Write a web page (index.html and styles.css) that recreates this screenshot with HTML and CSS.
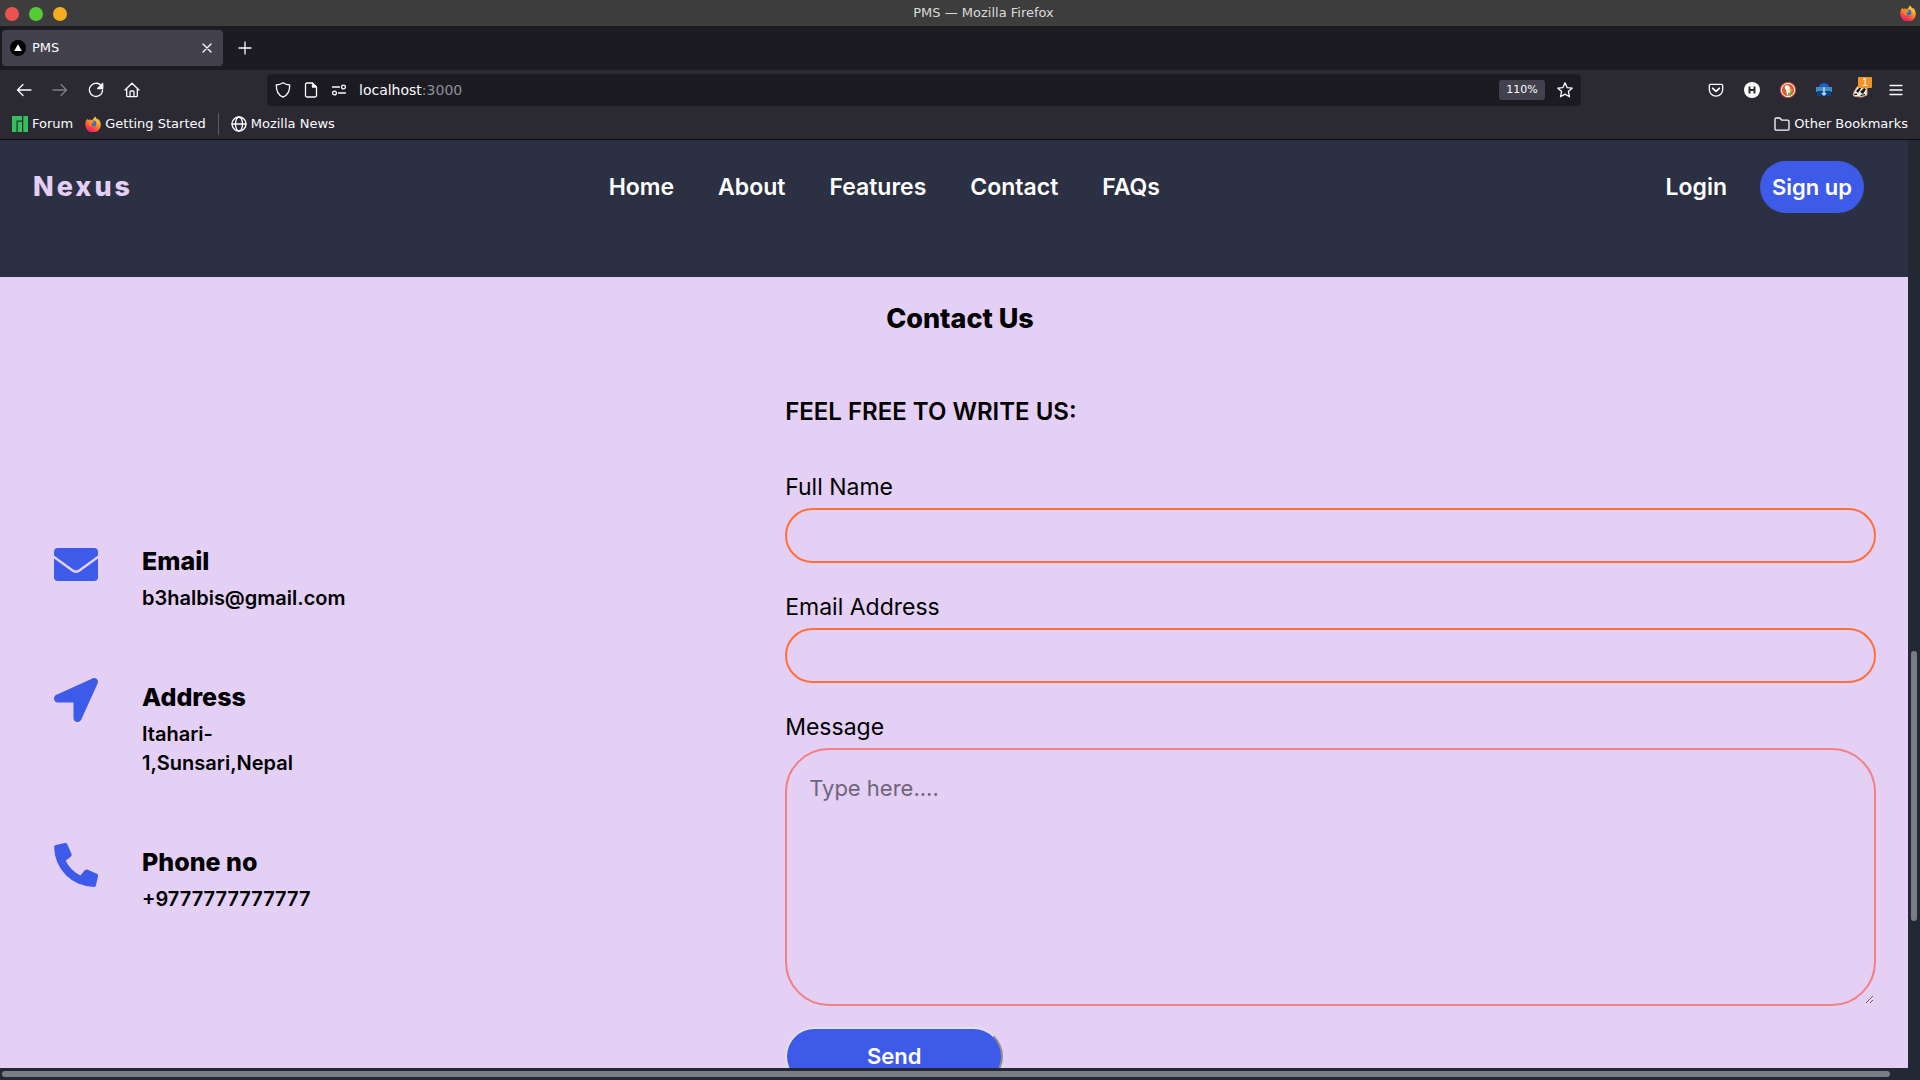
FILE: index.html
```html
<!DOCTYPE html>
<html lang="en">
<head>
<meta charset="utf-8">
<title>PMS</title>
<link rel="stylesheet" href="styles.css">
</head>
<body>
<svg class="defs" aria-hidden="true">
  <defs>
    <linearGradient id="flame" x1="0.8" y1="0" x2="0.3" y2="1">
      <stop offset="0" stop-color="#ffe93c"/><stop offset="0.4" stop-color="#ff9a1f"/><stop offset="0.75" stop-color="#ff4040"/><stop offset="1" stop-color="#e31587"/>
    </linearGradient>
    <symbol id="firefox" viewBox="0 0 16 16">
      <path fill="url(#flame)" d="M10 .2c.4 1.500 2 2.300 3 3.500l.300-.7c1.600 1.700 2.500 3.900 2.500 5.800A7.700 7.700 0 0 1 .3 9C.2 6.500 1 4.500 2.500 2.600l.3 1.700c1.200-.8 2.600-.7 3.700-.2C8 3.800 9.200 2 10 .2z"/>
      <circle cx="8.300" cy="7.500" r="3" fill="#2a6fe0"/>
      <path fill="#ff8a1c" d="M2.800 4.300c1.500-.8 3-.5 4.200.7 1 .5 2 .6 2.200 1.300-.6.8-1.700.7-2.400 1.300-.7.7-.2 2 1 2.600-2.200.3-4.300-1-5-5.900z"/>
    </symbol>
  </defs>
</svg>

<header class="titlebar">
  <div class="lights"><span class="light red"></span><span class="light green"></span><span class="light amber"></span></div>
  <span class="window-title">PMS — Mozilla Firefox</span>
  <svg class="icon16 app-icon"><use href="#firefox"/></svg>
</header>

<div class="tabstrip">
  <div class="tab">
    <svg class="icon16" viewBox="0 0 16 16"><circle cx="8" cy="8" r="8" fill="#000"/><path fill="#fff" d="M8 4.200 11.800 11H4.200z"/></svg>
    <span class="tab-title">PMS</span>
    <button class="plain" aria-label="Close tab"><svg class="line" width="10" height="10" viewBox="0 0 10 10"><path d="m1 1 8 8M9 1 1 9"/></svg></button>
  </div>
  <button class="plain new-tab" aria-label="New tab"><svg class="line" width="14" height="14" viewBox="0 0 14 14"><path d="M7 1v12M1 7h12"/></svg></button>
</div>

<div class="toolbar">
  <div class="tools">
    <button class="plain" aria-label="Back"><svg class="line icon16" viewBox="0 0 16 16"><path d="M15 8H1.500M7 2.500 1.500 8 7 13.500"/></svg></button>
    <button class="plain" aria-label="Forward" disabled><svg class="line icon16" viewBox="0 0 16 16"><path d="M1 8h13.500M9 2.500 14.500 8 9 13.500"/></svg></button>
    <button class="plain" aria-label="Reload"><svg class="line icon16" viewBox="0 0 16 16"><path d="M13.700 4.500A6.600 6.600 0 1 0 14.600 8"/><path class="solid" d="M14.700 1.500v5H9.700z"/></svg></button>
    <button class="plain" aria-label="Home"><svg class="line icon16" viewBox="0 0 16 16"><path d="M1 8 8 1.200 15 8M2.700 6.500v7.200c0 .6.400 1 1 1h8.600c.6 0 1-.4 1-1V6.500M6 14.500V10c0-.6.400-1 1-1h2c.6 0 1 .4 1 1v4.500"/></svg></button>
  </div>
  <div class="urlbar">
    <svg class="line icon16" viewBox="0 0 16 16"><path d="M8 .8c2 1.400 4 2 6.700 2.200C14.900 9 13 13 8 15.200 3 13 1.100 9 1.300 3 4 2.800 6 2.200 8 .8z"/></svg>
    <svg class="line icon16" viewBox="0 0 16 16"><path d="M9.500 1H4a1.500 1.500 0 0 0-1.500 1.500v11A1.500 1.500 0 0 0 4 15h8a1.500 1.500 0 0 0 1.500-1.500V5z"/><path class="solid" d="M9.500 1.500V5h3.500z"/></svg>
    <svg class="line icon16" viewBox="0 0 16 16"><circle cx="12.500" cy="5" r="1.900"/><circle cx="3.500" cy="11" r="1.900"/><path d="M1.500 5h7M7.500 11h7"/></svg>
    <span class="address">localhost<span class="port">:3000</span></span>
    <button class="zoom-level">110%</button>
    <button class="plain" aria-label="Bookmark this page"><svg class="line icon16" viewBox="0 0 16 16"><path d="m8 .8 2.100 4.800 5.200.5-3.900 3.500 1.100 5.200L8 12.100l-4.500 2.700 1.100-5.200L.7 6.100l5.200-.5z"/></svg></button>
  </div>
  <div class="tools extensions">
    <button class="plain" aria-label="Save to Pocket"><svg class="line icon16" viewBox="0 0 16 16"><path d="M2.500 2.300h11c.7 0 1.200.5 1.200 1.200v4a6.700 6.700 0 0 1-13.400 0v-4c0-.7.5-1.200 1.200-1.200z"/><path d="m4.700 6.300 3.300 3 3.300-3" stroke-width="1.800"/></svg></button>
    <button class="plain" aria-label="Honey"><svg class="icon16" viewBox="0 0 16 16"><circle cx="8" cy="8" r="8" fill="#fff"/><path d="M5.500 4.500v7M10.500 4.500v7M5.500 8h5" stroke="#2b2a33" stroke-width="2"/></svg></button>
    <button class="plain" aria-label="DuckDuckGo"><svg class="icon16" viewBox="0 0 16 16"><circle cx="8" cy="8" r="8" fill="#de5833"/><circle cx="8" cy="8" r="6.600" fill="none" stroke="#fff"/><path fill="#fff" d="M5 4c2-1.500 4.600-.5 5 2l.7 6.500c-1 .8-2.500 1-3.500.8L6 8C5 7 4.500 5.500 5 4z"/><path fill="#fdb913" d="M8.500 7.200h4.300l-1 1.600H9z"/><path fill="#4cba3c" d="M8 10.500h3.500v2.500H8z"/></svg></button>
    <button class="plain" aria-label="Downloader"><svg class="icon16" viewBox="0 0 16 16"><path fill="#1762c4" d="M3 5a5 4 0 0 1 10 0z"/><path fill="#4a8cc4" d="M0 5h16v5H0z"/><path fill="#0e4586" d="M1 9h14v5H1z"/><path d="M8 5v8M6 11l2 2 2-2" fill="none" stroke="#b9e0fa" stroke-width="1.500"/></svg></button>
    <button class="plain badger" aria-label="Privacy Badger"><svg class="icon16" viewBox="0 0 16 16"><path fill="#f5efe6" stroke="#d49c68" d="M1 13C2 9 5 4 9 2l6 2v9l-5 2-7-.5z"/><path fill="#151515" d="m4 9 5-5 1 1-4 6zM8 10l4-4 2 1-3 5zM2 12l3-.5v1.500H2zM8 13l5-1v1l-4 1z"/></svg><span class="badge">1</span></button>
    <button class="plain" aria-label="Menu"><svg class="line icon16" viewBox="0 0 16 16"><path d="M2 3.500h12M2 8h12M2 12.500h12"/></svg></button>
  </div>
</div>

<nav class="bookmarks" aria-label="Bookmarks">
  <a href="#"><svg class="icon16" viewBox="0 0 16 16"><path fill="#35bf5c" d="M0 0h10v4.500H4.500V16H0zM5.700 5.700H10V16H5.700zM11.300 0H16v16h-4.700z"/></svg>Forum</a>
  <a href="#"><svg class="icon16"><use href="#firefox"/></svg>Getting Started</a>
  <span class="divider"></span>
  <a href="#"><svg class="line icon16" viewBox="0 0 16 16"><circle cx="8" cy="8" r="7"/><ellipse cx="8" cy="8" rx="3.500" ry="7"/><path d="M1 8h14"/></svg>Mozilla News</a>
  <a class="other" href="#"><svg class="line icon16" viewBox="0 0 16 16"><path d="M1 13V3.500C1 2.700 1.500 2 2.300 2h3.500l2 2.200h6c.7 0 1.200.5 1.200 1.200V13c0 .7-.5 1.200-1.200 1.200H2.300C1.500 14.200 1 13.700 1 13z"/></svg>Other Bookmarks</a>
</nav>

<div class="browser-body">
  <div class="viewport">
    <div class="page">
      <header class="site-header">
        <a class="brand" href="#">Nexus</a>
        <nav class="site-nav">
          <a href="#">Home</a><a href="#">About</a><a href="#">Features</a><a href="#contact">Contact</a><a href="#">FAQs</a>
        </nav>
        <div class="account"><a href="#">Login</a><button class="signup">Sign up</button></div>
      </header>
      <main id="contact">
        <h1>Contact Us</h1>
        <div class="columns">
          <div class="details">
            <section class="detail">
              <svg class="detail-icon" viewBox="0 0 44 44"><path fill="#3d5ae9" d="M4 6h36a4 4 0 0 1 4 4v3.500L25 27.300a5 5 0 0 1-6 0L0 13.500V10a4 4 0 0 1 4-4zM0 16.600 17.500 29.200a7.500 7.500 0 0 0 9 0L44 16.600V35a4 4 0 0 1-4 4H4a4 4 0 0 1-4-4z"/></svg>
              <div><h2>Email</h2><p>b3halbis@gmail.com</p></div>
            </section>
            <section class="detail">
              <svg class="detail-icon" viewBox="0 0 44 44"><path fill="#3d5ae9" d="M38.500.4c3.300-1.500 6.600 1.700 5.100 5.200L27.300 41.400c-2 4.300-7.800 3-7.800-1.500V24.500H4c-4.500 0-5.600-5.900-1.500-7.800z"/></svg>
              <div><h2>Address</h2><p>Itahari-<wbr>1,Sunsari,Nepal</p></div>
            </section>
            <section class="detail">
              <svg class="detail-icon" viewBox="0 0 44 44"><path fill="#3d5ae9" d="M2 2.100 11 .1c1-.2 1.900.3 2.300 1.200l4.200 9.700c.4.900.1 1.900-.6 2.500L11.700 17.800A32 32 0 0 0 26.400 32.500l4.300-5.300c.6-.7 1.600-1 2.500-.6l9.600 4.200c.9.4 1.400 1.300 1.200 2.300L42 42.200c-.2 1-1 1.700-2 1.700A40 40 0 0 1 .2 4.100c0-1 .8-1.800 1.800-2z"/></svg>
              <div><h2>Phone no</h2><p>+9777777777777</p></div>
            </section>
          </div>
          <form class="contact-form">
            <h2>FEEL FREE TO WRITE US:</h2>
            <label for="name">Full Name</label>
            <input id="name" type="text">
            <label for="email">Email Address</label>
            <input id="email" type="email">
            <label for="message">Message</label>
            <textarea id="message" placeholder="Type here...."></textarea>
            <button class="send" type="button">Send</button>
          </form>
        </div>
      </main>
    </div>
  </div>
  <div class="vscroll"><span class="vthumb"></span></div>
  <div class="hscroll"><span class="hthumb"></span></div>
</div>
</body>
</html>
```

FILE: styles.css
```css
* { box-sizing: border-box; }
body {
  margin: 0;
  height: 100vh;
  display: flex;
  flex-direction: column;
  overflow: hidden;
  background: #2b2a33;
  color: #fbfbfe;
  font: 13px/18px "DejaVu Sans", sans-serif;
}
a { color: inherit; text-decoration: none; }
h1, h2, p { margin: 0; }
svg { display: block; flex: none; }
.defs { position: absolute; width: 0; height: 0; }
.icon16 { width: 16px; height: 16px; }
.line { fill: none; stroke: #fbfbfe; stroke-width: 1.3; stroke-linecap: round; stroke-linejoin: round; }
.solid { fill: #fbfbfe; }
.plain { display: block; padding: 0; border: 0; background: none; color: inherit; }
.plain:disabled { opacity: 0.4; }

/* Window frame */
.titlebar {
  flex: none;
  height: 26px;
  display: grid;
  grid-template-columns: 1fr auto 1fr;
  align-items: center;
  padding: 0 4px 0 5px;
  background: #3d3d3d;
}
.lights { display: flex; gap: 10px; padding-top: 2px; }
.light { width: 14px; height: 14px; border-radius: 50%; }
.red { background: #ec5350; }
.green { background: #57cb35; }
.amber { background: #f2ae1c; }
.window-title { padding-left: 46px; color: #dadada; line-height: 26px; }
.app-icon { justify-self: end; }

.tabstrip { flex: none; height: 44px; display: flex; align-items: center; gap: 15px; padding: 0 2px; background: #1c1b22; }
.tab { width: 221px; height: 36px; display: flex; align-items: center; gap: 6px; padding: 0 11px 0 8px; border-radius: 4px; background: #42414d; }
.tab-title { flex: 1; }

.toolbar { flex: none; height: 40px; display: flex; align-items: center; padding: 0 16px; }
.tools { display: flex; gap: 20px; }
.urlbar { flex: 1; height: 32px; display: flex; align-items: center; gap: 12px; margin: 0 127px 0 127px; padding: 0 8px; border-radius: 4px; background: #1c1b22; }
.address { flex: 1; font-size: 14px; }
.port { color: #8f8f9d; }
.zoom-level { width: 46px; height: 20px; padding: 0; border: 0; border-radius: 3px; background: #42414d; color: #fbfbfe; font: 11px/20px "DejaVu Sans", sans-serif; }
.badger { position: relative; }
.badge { position: absolute; top: -5px; left: 6px; width: 14px; height: 11px; border-radius: 1px; background: #f09428; font-size: 10px; line-height: 11px; }

.bookmarks { flex: none; height: 30px; display: flex; align-items: center; gap: 12px; padding: 0 12px 2px; border-bottom: 1px solid #0c0c0d; }
.bookmarks a { display: flex; align-items: center; gap: 4px; }
.divider { width: 1px; height: 22px; background: #5b5b66; }
.bookmarks .other { margin-left: auto; }

/* Scrolling area */
.browser-body { flex: 1; min-height: 0; display: grid; grid-template: minmax(0, 1fr) 12px / minmax(0, 1fr) 12px; background: #222935; }
.viewport { overflow: hidden; background: #e4cff5; }
.vscroll { grid-row: span 2; padding-left: 3px; display: flex; flex-direction: column; }
.vthumb { width: 6px; height: 270px; margin-top: 511px; border-radius: 3px; background: #7b7d85; }
.hscroll { padding: 3px 18px 3px 2px; }
.hthumb { display: block; height: 6px; border-radius: 3px; background: #7b7d85; }

/* Site */
.page { width: 100vw; color: #000; font: 23px/33px Inter, sans-serif; }
.site-header { height: 137px; display: flex; justify-content: space-between; align-items: flex-start; padding: 21px 56px 0 33px; background: #2b3143; color: #fff; font-weight: 600; line-height: 52px; }
.brand { color: #e4cff5; font-size: 27px; font-weight: 800; letter-spacing: 3px; }
.site-nav { display: flex; gap: 44px; padding-right: 30px; }
.account { display: flex; gap: 33px; }
.signup { width: 104px; height: 52px; padding: 0; border: 0; border-radius: 26px; background: #3d5ae9; color: #fff; font: inherit; font-size: 22px; }

h1 { padding-top: 22px; font-size: 27px; line-height: 39px; font-weight: 800; text-align: center; }
.columns { display: grid; grid-template-columns: 2fr 3fr; gap: 4px; padding: 54px 44px 0 54px; }
.details { display: flex; flex-direction: column; gap: 65px; padding-top: 150px; }
.detail { display: flex; gap: 44px; }
.detail-icon { width: 44px; height: 44px; }
.detail div { width: 160px; font-size: 20px; line-height: 29px; font-weight: 600; }
.detail h2 { padding-bottom: 4px; font-size: 25px; line-height: 38px; font-weight: 800; }
.contact-form { display: flex; flex-direction: column; }
.contact-form h2 { margin-bottom: 39px; font-size: 24px; line-height: 40px; font-weight: 600; }
.contact-form label { margin-bottom: 4px; }
.contact-form input, .contact-form textarea { width: 100%; border: 2px solid #ff7038; border-radius: 28px; background: transparent; color: #000; font: inherit; }
.contact-form input { height: 55px; margin-bottom: 28px; padding: 0 22px; }
.contact-form textarea { height: 258px; margin-bottom: 21px; padding: 22px; border-color: #f47f80; border-radius: 44px; font-size: 22px; }
textarea::placeholder { color: #6f6579; }
.send { width: 218px; height: 59px; padding: 0; border: 2px outset #e3e3e3; border-radius: 30px; background: #3d5ae9; color: #fff; font: inherit; font-size: 22px; font-weight: 600; }
```
